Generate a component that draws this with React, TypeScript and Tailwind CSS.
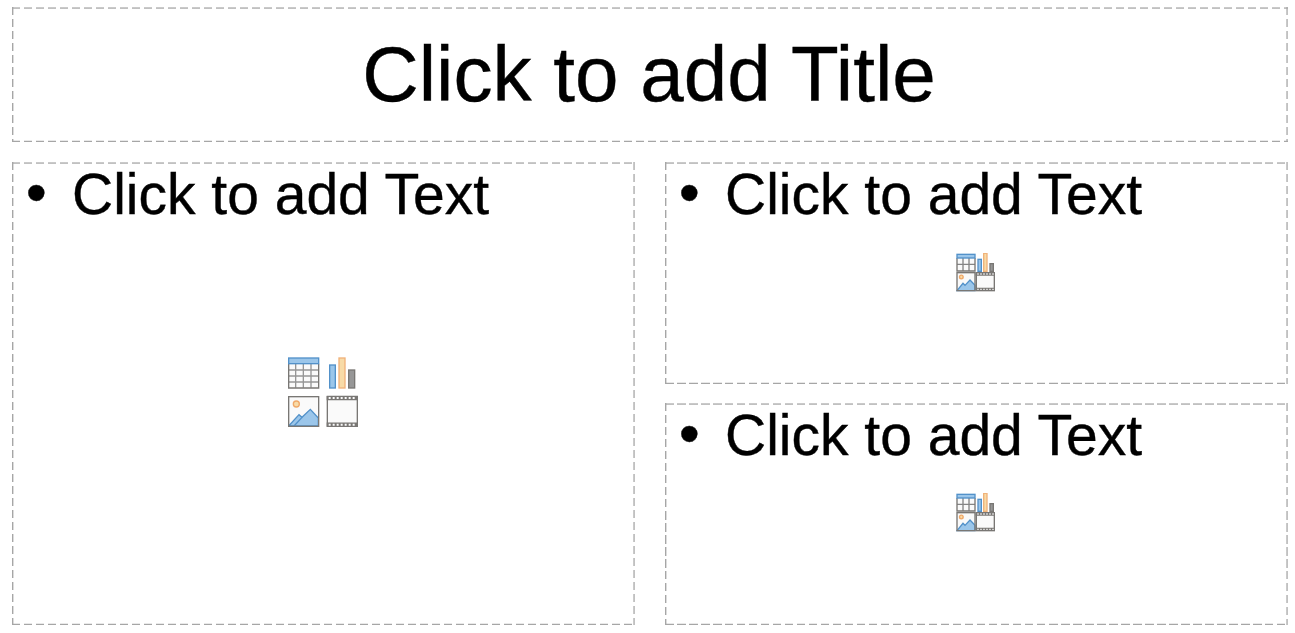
import React from "react";
import clsx from "clsx";

interface IPlaceholder {
  readonly className?: string;
  children: React.ReactNode;
}

// each edge is one dark row of dashes with a paler row beside it
const dashX =
  "bg-[repeating-linear-gradient(90deg,#a6a6a6_0_8.5px,transparent_8.5px_12px)]";
const dashY =
  "bg-[repeating-linear-gradient(180deg,#a6a6a6_0_8.5px,transparent_8.5px_12px)]";

const Placeholder: React.FC<IPlaceholder> = ({ className, children }) => {
  return (
    <section className={clsx("relative", className)}>
      <span className={clsx("absolute inset-x-0 top-0 h-px opacity-60", dashX)} />
      <span className={clsx("absolute inset-x-0 top-px h-px opacity-70", dashX)} />
      <span className={clsx("absolute inset-x-0 bottom-0 h-px", dashX)} />
      <span className={clsx("absolute inset-x-0 bottom-px h-px opacity-25", dashX)} />
      <span className={clsx("absolute inset-y-0 left-0 w-px", dashY)} />
      <span className={clsx("absolute inset-y-0 left-px w-px opacity-40", dashY)} />
      <span className={clsx("absolute inset-y-0 right-0 w-px opacity-70", dashY)} />
      <span className={clsx("absolute inset-y-0 right-px w-px opacity-60", dashY)} />
      {children}
    </section>
  );
};

const InsertIcons: React.FC = () => {
  return (
    <svg width="70" height="70" viewBox="0 0 210 210" fill="none" strokeWidth="4">
      {/* table */}
      <rect x="2" y="3" width="90" height="90" fill="#fafafa" />
      <path
        d="M23 20V92M46 20V92M69 20V92M2 39H92M2 57H92M2 75H92"
        stroke="#969696"
      />
      <path d="M2 20V93H92V20" stroke="#797774" />
      <rect x="2" y="3" width="90" height="17" fill="#9bc6ea" stroke="#5291c9" />
      {/* chart */}
      <rect x="125" y="24" width="17" height="69" fill="#9bc6ea" stroke="#5291c9" />
      <rect x="153" y="3" width="18" height="90" fill="#f8dba7" stroke="#f0b27a" />
      <rect x="182" y="39" width="18" height="54" fill="#979797" stroke="#797774" />
      {/* image */}
      <rect x="2" y="119" width="90" height="89" fill="#fafafa" />
      <circle cx="25" cy="141" r="9" fill="#f8dba7" stroke="#f0a868" />
      <path
        d="M2 207L33 173L42 181L67 157L91 183V207Z"
        fill="#9bc6ea"
        stroke="#5291c9"
      />
      <path d="M18 207L42 181" stroke="#5291c9" />
      <rect x="2" y="119" width="90" height="89" stroke="#797774" />
      {/* movie */}
      <rect x="118" y="119" width="90" height="89" fill="#fafafa" stroke="#797774" />
      <path d="M116 123H210M116 203H210" stroke="#797774" strokeWidth="13" />
      <path d="M122 123H206M122 203H206" stroke="#fafafa" strokeWidth="6" strokeDasharray="6 6" />
    </svg>
  );
};

const InsertIconsSmall: React.FC = () => {
  return (
    <svg width="39" height="39" viewBox="0 0 117 117" fill="none" strokeWidth="4">
      {/* table */}
      <rect x="3" y="4" width="54" height="50" fill="#fafafa" />
      <path d="M21 15V54M39 15V54M3 34H57" stroke="#858585" />
      <path d="M3 15V54H57V15" stroke="#797774" />
      <rect x="3" y="4" width="54" height="11" fill="#9bc6ea" stroke="#5291c9" />
      {/* chart */}
      <rect x="66" y="19" width="10" height="36" fill="#9bc6ea" stroke="#5291c9" />
      <rect x="83" y="1" width="10" height="54" fill="#f8dba7" stroke="#f0b27a" />
      <rect x="102" y="32" width="10" height="23" fill="#979797" stroke="#797774" />
      {/* image */}
      <rect x="3" y="59" width="54" height="54" fill="#fafafa" />
      <circle cx="16" cy="72" r="5.5" fill="#f8dba7" stroke="#f0a868" />
      <path
        d="M3 113L21 91L27 97L42 81L57 97V113Z"
        fill="#9bc6ea"
        stroke="#5291c9"
      />
      <rect x="3" y="59" width="54" height="54" stroke="#797774" />
      {/* movie */}
      <rect x="61" y="59" width="54" height="54" fill="#fafafa" stroke="#797774" />
      <path d="M59 63H117M59 109H117" stroke="#797774" strokeWidth="10" />
      <path d="M64 63H113M64 109H113" stroke="#fafafa" strokeWidth="4" strokeDasharray="4 5" />
    </svg>
  );
};

const Outline: React.FC = () => {
  return (
    <div className="flex h-[61px] pt-[2px] pl-[14px] text-[57px] leading-[60px] [-webkit-text-stroke:0.4px_black]">
      <span className="-mt-px w-[46px] text-[59px]">•</span>
      <p className="whitespace-nowrap">Click to add Text</p>
    </div>
  );
};

const App: React.FC = () => {
  return (
    <main className="flex h-[633px] w-[1295px] flex-col gap-5 overflow-hidden bg-white pt-[7px] pr-[7px] pb-2 pl-3 font-['Liberation_Sans',Arial,sans-serif] text-black">
      <Placeholder className="flex h-[135px] shrink-0 items-center justify-center">
        <h1 className="pr-[2px] text-[78.2px] leading-none whitespace-nowrap [-webkit-text-stroke:0.4px_black]">
          Click to add Title
        </h1>
      </Placeholder>
      <div className="grid flex-1 grid-cols-2 gap-x-[30px]">
        <Placeholder className="flex flex-col">
          <Outline />
          <div className="pt-[134px] pl-[276px]">
            <InsertIcons />
          </div>
        </Placeholder>
        <div className="flex flex-col gap-[19px]">
          <Placeholder className="flex-1">
            <Outline />
            <div className="pt-[30px] pl-[291px]">
              <InsertIconsSmall />
            </div>
          </Placeholder>
          <Placeholder className="flex-1">
            <Outline />
            <div className="pt-[29px] pl-[291px]">
              <InsertIconsSmall />
            </div>
          </Placeholder>
        </div>
      </div>
    </main>
  );
};

export default App;
